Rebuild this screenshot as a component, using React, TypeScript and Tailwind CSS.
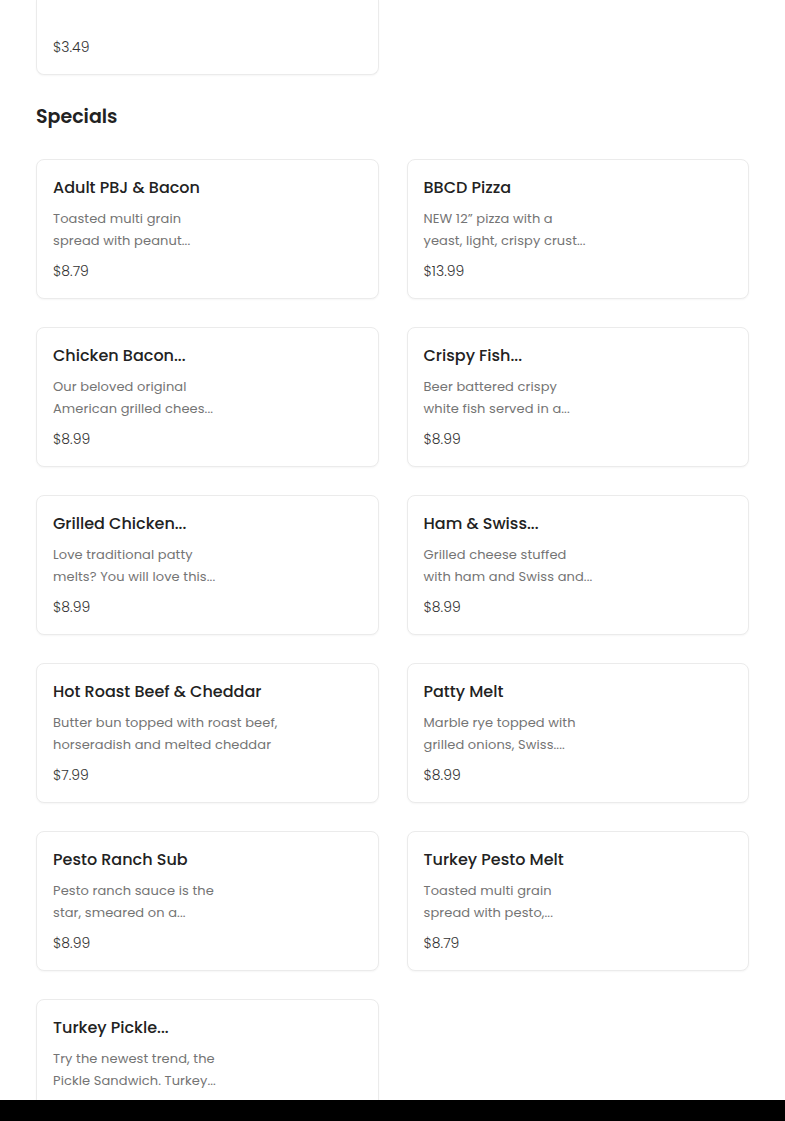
const specials = [
  { name: "Adult PBJ & Bacon", desc: ["Toasted multi grain", "spread with peanut..."], price: "$8.79" },
  { name: "BBCD Pizza", desc: ["NEW 12” pizza with a", "yeast, light, crispy crust..."], price: "$13.99" },
  { name: "Chicken Bacon...", desc: ["Our beloved original", "American grilled chees..."], price: "$8.99" },
  { name: "Crispy Fish...", desc: ["Beer battered crispy", "white fish served in a..."], price: "$8.99" },
  { name: "Grilled Chicken...", desc: ["Love traditional patty", "melts? You will love this..."], price: "$8.99" },
  { name: "Ham & Swiss...", desc: ["Grilled cheese stuffed", "with ham and Swiss and..."], price: "$8.99" },
  { name: "Hot Roast Beef & Cheddar", desc: ["Butter bun topped with roast beef,", "horseradish and melted cheddar"], price: "$7.99" },
  { name: "Patty Melt", desc: ["Marble rye topped with", "grilled onions, Swiss...."], price: "$8.99" },
  { name: "Pesto Ranch Sub", desc: ["Pesto ranch sauce is the", "star, smeared on a..."], price: "$8.99" },
  { name: "Turkey Pesto Melt", desc: ["Toasted multi grain", "spread with pesto,..."], price: "$8.79" },
  { name: "Turkey Pickle...", desc: ["Try the newest trend, the", "Pickle Sandwich. Turkey..."], price: "$8.99" },
];

function ItemCard({ name, desc, price }: { name: string; desc: string[]; price: string }) {
  return (
    <div className="bg-white border border-[#ebebeb] rounded-lg shadow-[0_1px_2px_rgba(0,0,0,0.04)] px-[16px] pt-[16px] pb-[17px] h-[140px]">
      <div className="text-[16px] leading-[24px] font-medium text-[#222]">{name}</div>
      <div className="mt-[8px] text-[13px] leading-[22px] text-[#747474] tracking-[0.1px]">
        {desc.map((d) => (
          <div key={d}>{d}</div>
        ))}
      </div>
      <div className="mt-[9px] text-[14px] leading-[20px] font-light text-[#333]">{price}</div>
    </div>
  );
}

export default function App() {
  return (
    <div className="min-h-screen bg-white font-['Poppins','Inter',sans-serif]">
      <div className="px-[36px] w-[785px]">
        {/* tail of the previous section's last card, scrolled mostly out of view */}
        <div className="w-[343px] h-[75px] bg-white border-x border-b border-[#ebebeb] rounded-b-lg shadow-[0_1px_2px_rgba(0,0,0,0.04)] px-[16px] pt-[37px]">
          <div className="text-[14px] leading-[20px] font-light text-[#333]">$3.49</div>
        </div>

        <h2 className="mt-[31px] text-[19px] leading-[22px] font-semibold text-[#222]">Specials</h2>

        <div className="mt-[31px] grid grid-cols-2 gap-x-[28px] gap-y-[28px] pb-10">
          {specials.map((s) => (
            <ItemCard key={s.name} {...s} />
          ))}
        </div>
      </div>
      <div className="fixed bottom-0 left-0 right-0 h-[21px] bg-black" />
    </div>
  );
}
